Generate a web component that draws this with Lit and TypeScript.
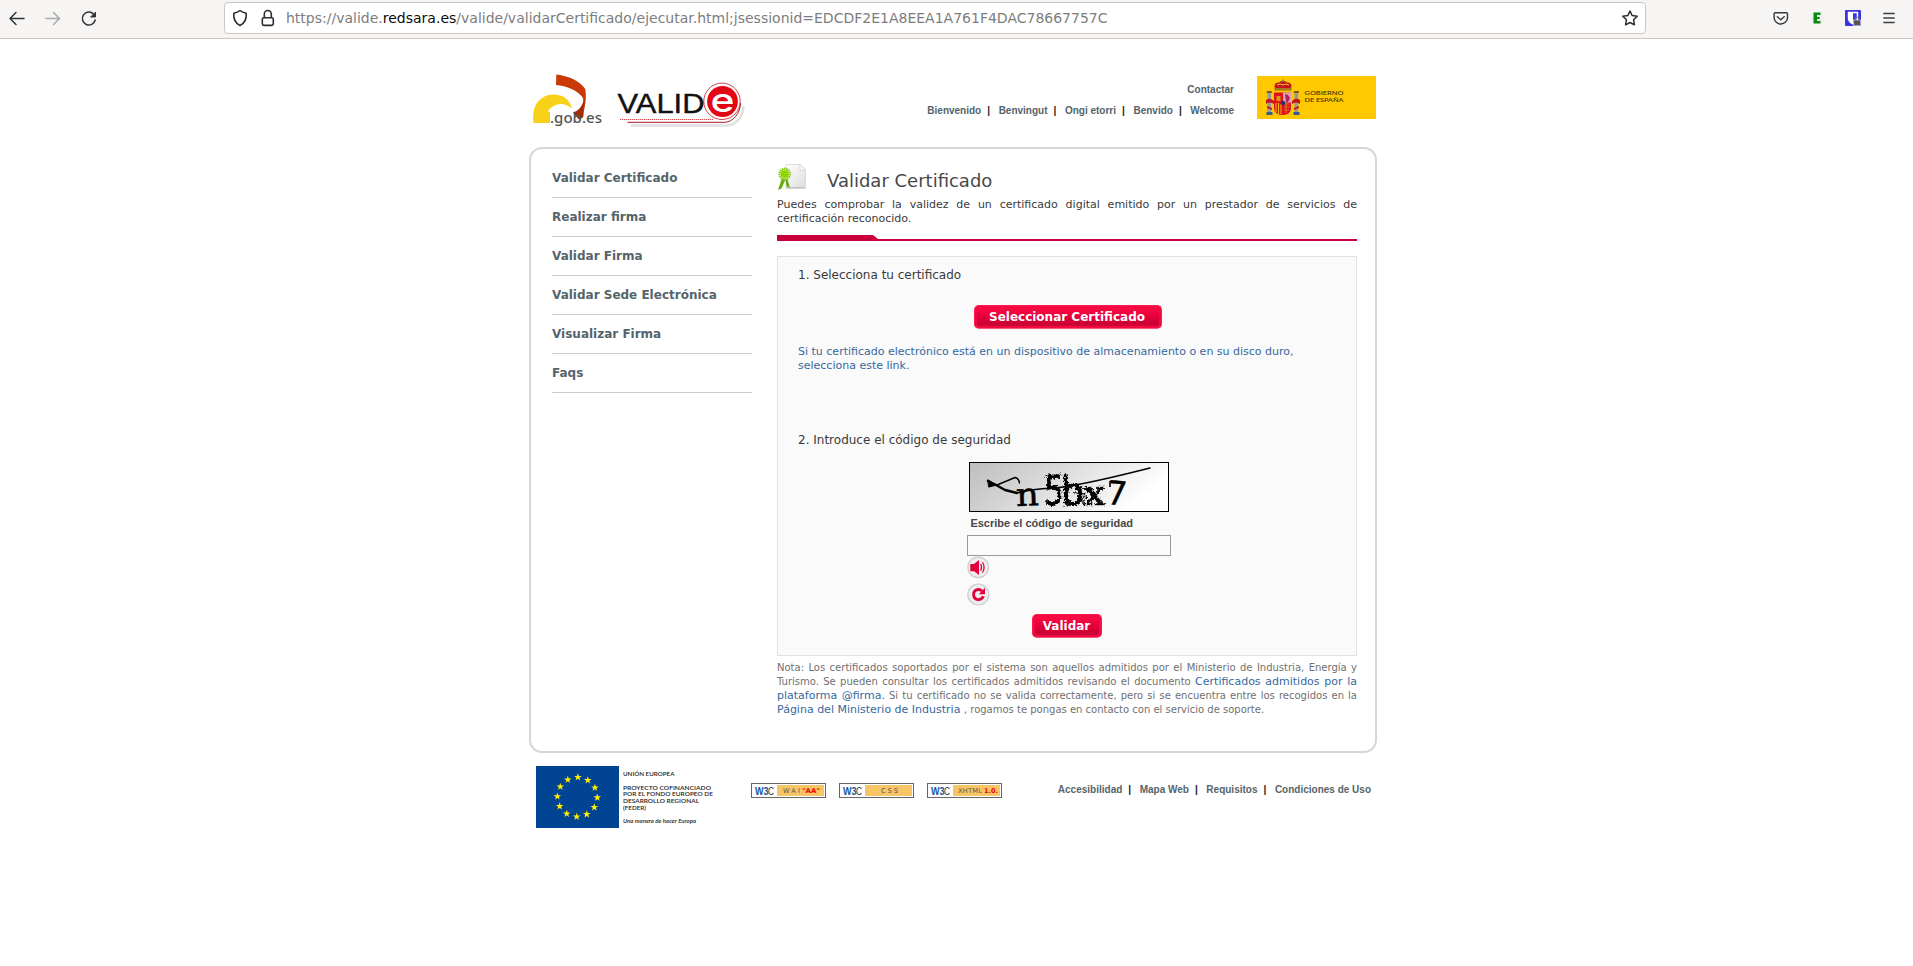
import { LitElement, html, css, svg } from "lit";
import { customElement } from "lit/decorators.js";

@customElement("browser-bar")
class BrowserBar extends LitElement {
  static styles = css`
    :host { display: block; }
    .bar { box-sizing: border-box; height: 39px; background: #f6f5f4; border-bottom: 1px solid #cdc7c2; display: flex; align-items: flex-start; }
    .tools { width: 224px; height: 36px; flex: none; }
    .field { box-sizing: border-box; width: 1422px; height: 32px; margin-top: 2px; background: #fff; border: 1px solid #cdc7c2; border-radius: 4px; display: flex; align-items: center; }
    .field svg { flex: none; }
    .url { flex: 1; font: 14px/30px "DejaVu Sans", sans-serif; color: #7d7d7d; white-space: nowrap; }
    .host { color: #0c0c0d; }
    svg { display: block; }
    .ext { flex: none; }
  `;
  render() {
    return html`<div class="bar">
      <svg class="tools" width="224" height="36" fill="none" stroke="#2e3436" stroke-width="1.5" stroke-linecap="round" stroke-linejoin="round">
        <path d="M10 18.5H24M16 12.5L10 18.5L16 24.5"/>
        <path stroke="#a9aaa9" d="M46 18.5H59.5M53.5 12.5L59.5 18.5L53.5 24.5"/>
        <path d="M93.5 14A6.5 6.5 0 1 0 95.2 20"/><path fill="#2e3436" stroke-width="1" d="M95.5 12.5V17H91Z"/>
      </svg>
      <div class="field">
        <svg width="61" height="30" fill="none" stroke="#2a2e30" stroke-width="1.6" stroke-linejoin="round">
          <path d="M15 7.5C13 9.2 11 9.8 8.8 10.2C8.4 15.5 10 20 15 22.5C20 20 21.6 15.5 21.2 10.2C19 9.8 17 9.2 15 7.5Z"/>
          <rect x="37.3" y="14.8" width="11" height="7.6" rx="1.6"/><path d="M39.3 14.5V11a3.5 3.5 0 0 1 7 0V14.5"/>
        </svg>
        <span class="url">https://valide.<span class="host">redsara.es</span>/valide/validarCertificado/ejecutar.html;jsessionid=EDCDF2E1A8EEA1A761F4DAC78667757C</span>
        <svg width="31" height="30" fill="none" stroke="#2a2e30" stroke-width="1.5" stroke-linejoin="round"><path d="M16 8L18.2 12.6L23.2 13.3L19.6 16.8L20.4 21.8L16 19.5L11.6 21.8L12.4 16.8L8.8 13.3L13.8 12.6Z"/></svg>
      </div>
      <svg class="ext" width="267" height="36" fill="none">
        <path d="M129 12.8H140.5a1 1 0 0 1 1 1V17.5a6.5 6.3 0 0 1-13.4 0V13.8Z" stroke="#33383c" stroke-width="1.4"/>
        <path d="M131.4 16.8L134.8 19.8L138.2 16.8" stroke="#33383c" stroke-width="1.4" stroke-linecap="round" stroke-linejoin="round"/>
        <circle cx="171" cy="18" r="7" fill="#efefef"/>
        <path d="M167.5 12.5H174.5V15H171V16.9H173.7V19.1H171V21.1H174.5V23.6H167.5Z" fill="#0a8a0a"/>
        <rect x="199" y="10" width="16" height="16" rx="1" fill="#3a35e0"/>
        <path d="M201.8 11.8H212.2V18.5C212.2 21.5 209 23.8 207 24.7C205 23.8 201.8 21.5 201.8 18.5Z" fill="#fff"/>
        <path d="M207 13.2H210.7V18.5C210.7 20.5 208.5 22.2 207 23Z" fill="#3a35e0"/>
        <rect x="207.5" y="20" width="7" height="5.5" fill="#555" stroke="#e8e8e8" stroke-width=".6"/><path d="M209 20v-1a2 2 0 0 1 4 0v1" stroke="#777"/>
        <path d="M237.3 13.5H248.7M237.3 18H248.7M237.3 22.5H248.7" stroke="#3a3e40" stroke-width="1.4"/>
      </svg>
    </div>`;
  }
}

@customElement("site-header")
class SiteHeader extends LitElement {
  static styles = css`
    :host { display: block; }
    .head { height: 108px; display: flex; padding-right: 1px; }
    svg { display: block; flex: none; }
    .links { flex: 1; display: flex; flex-direction: column; align-items: flex-end; padding: 44px 23px 0 0; font: bold 10px/14px "Liberation Sans", Arial, sans-serif; color: #55646b; gap: 7px; }
    .langs { display: flex; white-space: pre; }
    .sep { color: #222; width: 17.4px; padding-left: 6px; box-sizing: border-box; }
    .crest { margin-top: 37px; }
  `;
  render() {
    const langs = ["Bienvenido", "Benvingut", "Ongi etorri", "Benvido", "Welcome"];
    return html`<div class="head">
      <svg width="220" height="108" viewBox="529 39 220 108">
        <path d="M556.3 74.5C570 76.5 580 81 585.3 89C586.2 95 586 102 584.5 108C583.5 112 584 114 583.2 117L579 119.5C580 115 579.5 112 581 108C583.5 102 584.5 99 581 95.5C575 89.5 567 86 556 85Z" fill="#c93a06"/>
        <path d="M585 99C584 106 582 112 583.2 117L579 119.5C576 116 574 114 573 112C578 112 582 106 585 99Z" fill="#a52b04"/>
        <path d="M533.5 123C532 111 535 103 542 98C548 93.5 558 93.5 564 97C568 99.5 571 104 572 108.5C563 102 555 102.5 547.5 111.5H550V123Z" fill="#f7d117"/>
        <text x="550" y="122.5" font-family="Noto Sans" font-weight="500" font-size="15" fill="#555" textLength="52" lengthAdjust="spacingAndGlyphs">.gob.es</text>
        <path d="M631 125.4H727C735 125 743 118 743.5 106" fill="none" stroke="#e0e0e0" stroke-width="2.5"/>
        <circle cx="722" cy="101.3" r="18.2" fill="#fff" stroke="#d1444a" stroke-width="1"/>
        <circle cx="722.5" cy="101.5" r="15.4" fill="#e30613"/>
        <path d="M620 119.5H713" stroke="#d34d50" stroke-width="1" stroke-dasharray="1.3 .7"/><path d="M627.5 122.3H725C733 122 740.5 113 740.5 103" fill="none" stroke="#a71a20" stroke-width="1"/>
        <text x="617.5" y="113" font-family="Liberation Sans" font-size="27" fill="#111" stroke="#111" stroke-width=".4" textLength="87" lengthAdjust="spacingAndGlyphs">VALID</text>
        <text x="710.5" y="112" font-family="Inter" font-weight="500" font-size="33" fill="#fff" textLength="24" lengthAdjust="spacingAndGlyphs">e</text>
      </svg>
      <div class="links">
        <span>Contactar</span>
        <div class="langs">${langs.map((l, i) => html`${i ? html`<span class="sep">|</span>` : ""}<span>${l}</span>`)}</div>
      </div>
      <svg class="crest" width="119" height="43">
        <rect width="119" height="43" fill="#ffc800"/>
        <g fill="#c4161c">
          <path d="M18 13Q16 6 22 6.5Q26 3 30 6.5Q36 6 34 13Z"/><path d="M25.3 3.5h1.4v3h-1.4z" fill="#777"/>
          <path d="M17.5 12h17v2.6h-17z" fill="#a47b18"/><path d="M20 9q3-2 6 0q3-2 6 0" stroke="#f5c518" fill="none"/>
          <path d="M17 16.5H34V32Q34 38.5 25.5 39Q17 38.5 17 32Z" fill="#e01020"/>
          <path d="M26 16.5H34V26.5H26Z" fill="#d9a5b5"/><path d="M28 18l3 1 2 3-2 4h-2z" fill="#b3225f"/>
          <path d="M19.5 20h4v5h-4z" fill="#d99a10"/>
          <path d="M19 27V36M21.5 27V38M24 28V38" stroke="#f2b90c" stroke-width="1"/>
          <path d="M27 28h6M27 31h6M27 34h5M29 27v10" stroke="#d39b1b" stroke-width=".7"/>
          <circle cx="26" cy="27" r="2.2" fill="#22386f"/>
          <path d="M10.5 17h3.6v19h-3.6zM37.5 17h3.6v19h-3.6z" fill="#96999c"/>
          <path d="M9.8 15h5v2h-5zM36.8 15h5v2h-5z" fill="#7d5a13"/>
          <path d="M9.5 36h6v3h-6zM36.5 36h6v3h-6z" fill="#385a92"/>
          <path d="M9 24Q13 21 17 25V28Q12 25 9 28ZM35 25Q39 21 43 24V28Q39 25 35 28Z"/><path d="M10 30l5 2v2l-5-2zM42 30l-5 2v2l5-2z"/>
        </g>
        <g font-family="Lato" font-weight="600" font-size="6.2" fill="#4a3b00"><text x="47.5" y="18.6" textLength="39" lengthAdjust="spacingAndGlyphs">GOBIERNO</text><text x="47.5" y="26.3" textLength="39" lengthAdjust="spacingAndGlyphs">DE ESPAÑA</text></g>
      </svg>
    </div>`;
  }
}

@customElement("side-menu")
class SideMenu extends LitElement {
  static styles = css`
    :host { display: block; }
    .menu { display: flex; flex-direction: column; font: bold 12px/38px "DejaVu Sans", sans-serif; color: #55646b; }
    .item { border-bottom: 1px solid #ccc; }
  `;
  render() {
    return html`<nav class="menu">${["Validar Certificado", "Realizar firma", "Validar Firma", "Validar Sede Electrónica", "Visualizar Firma", "Faqs"].map((t) => html`<span class="item">${t}</span>`)}</nav>`;
  }
}

@customElement("certificate-form")
class CertificateForm extends LitElement {
  static styles = css`
    :host { display: block; font-family: "DejaVu Sans", sans-serif; color: #3a3a3a; }
    svg { display: block; overflow: visible; }
    .head { display: flex; height: 35px; gap: 20px; }
    .seal { margin-top: 1px; }
    .title { margin: 0; font-size: 18px; font-weight: normal; line-height: 35px; color: #484848; }
    .intro { margin: 0; font-size: 11px; line-height: 14px; text-align: justify; }
    .rule { margin: 9px 0 15px; }
    .box { box-sizing: border-box; height: 400px; border: 1px solid #e2e2e2; background: #fafafa; padding: 10px 20px 0; }
    .step { font-size: 12px; line-height: 16px; }
    .btn { box-sizing: border-box; height: 24px; width: 188px; margin: 22px 0 0 175.5px; display: flex; align-items: center; justify-content: center; border: 1px solid #ff1a4f; border-bottom-color: #f8557c; border-radius: 5px; background: linear-gradient(#ff1045, #e8003c 45%, #cc0034 80%, #d01040); box-shadow: inset 0 0 0 2px #f20a40; color: #fff; font: bold 12px/20px "DejaVu Sans", sans-serif; padding: 0 1px 1px 0; }
    .small { width: 70px; margin: 8px 0 0 233.5px; padding: 0 0 1px; }
    .link { color: #36689e; }
    .alt { margin: 16px 0 59px; width: 500px; font-size: 11px; line-height: 14px; }
    .captcha { margin: 14px 0 0 169px; width: 204px; display: flex; flex-direction: column; align-items: flex-start; }
    .picture { margin-left: 2px; }
    .label { margin: 4px 0 5px 3.4px; font: bold 11px/14px "Liberation Sans", Arial, sans-serif; color: #484848; }
    .input { box-sizing: border-box; width: 204px; height: 21px; border: 1px solid #999; background: #fafafa; padding: 0; border-radius: 0; display: block; margin: 0; }
    .again { margin-top: 5px; }
    .note { margin: 5px 0 0; font-size: 10px; line-height: 14px; color: #707070; text-align: justify; }
    .note .link { font-size: 11px; line-height: 13px; }
    .page-link { margin-right: 3px; }
  `;
  render() {
    return html`
      <div class="head">
        <svg class="seal" width="30" height="30">
          <defs><linearGradient id="pg" x2="1" y2="1"><stop stop-color="#fff"/><stop offset="1" stop-color="#ddd"/></linearGradient></defs>
          <path d="M9 .5H23L28.5 6V23.5H9Z" fill="url(#pg)" stroke="#d5d5d5" stroke-width=".8"/><path d="M9 24H28.5" stroke="#aaa"/><path d="M23 .5V6H28.5Z" fill="#fff" stroke="#ccc" stroke-width=".7"/>
          <path d="M5 14L1 26L4.5 24.5L8.5 15.5L9.5 22.5L13 23.5L10 14Z" fill="#6aad0a"/>
          <circle cx="7.7" cy="10" r="5.4" fill="#c7e87a" stroke="#8cc91c" stroke-width="2.2" stroke-dasharray="1.3 .9"/><circle cx="7.7" cy="10" r="3.8" fill="#8dd600"/>
        </svg>
        <h1 class="title">Validar Certificado</h1>
      </div>
      <p class="intro">Puedes comprobar la validez de un certificado digital emitido por un prestador de servicios de certificación reconocido.</p>
      <svg class="rule" width="580" height="6"><path d="M0 0H96L101 4H580V6H0Z" fill="#c9003a"/></svg>
      <div class="box">
        <div class="step">1. Selecciona tu certificado</div>
        <button class="btn">Seleccionar Certificado</button>
        <div class="alt link">Si tu certificado electrónico está en un dispositivo de almacenamiento o en su disco duro, selecciona este link.</div>
        <div class="step">2. Introduce el código de seguridad</div>
        <div class="captcha">
          <svg class="picture" width="200" height="50">
            <defs>
              <linearGradient id="cg" x2="1" y2=".3"><stop stop-color="#bebebe"/><stop offset=".3" stop-color="#d0d0d0"/><stop offset="1" stop-color="#fff"/></linearGradient>
              <filter id="rough" x="-20%" y="-20%" width="140%" height="140%"><feTurbulence type="fractalNoise" baseFrequency=".45" numOctaves="2" seed="4"/><feDisplacementMap in="SourceGraphic" scale="6" xChannelSelector="R" yChannelSelector="G"/></filter>
            </defs>
            <rect x=".5" y=".5" width="199" height="49" fill="url(#cg)" stroke="#000"/>
            <g fill="none" stroke="#000" stroke-linecap="round" stroke-linejoin="round">
              <path d="M28 23L46 15.5Q50 16.5 50.5 21" stroke-width="1.4"/>
              <path d="M19 19L27 23L36 28L48 31" stroke-width="2.4"/><path d="M48 31Q62 27 84 26T181 6" stroke-width="1.5"/>
              <path d="M19 18L28 23L20 25Z" fill="#000"/>
            </g>
            <g stroke="#000" stroke-width=".5">
              <text x="47" y="43.5" font-family="DejaVu Serif" font-size="32" textLength="23" lengthAdjust="spacingAndGlyphs" transform="rotate(-2 58 35)">n</text>
              <g filter="url(#rough)">
                <text x="75" y="42.5" font-family="DejaVu Sans" font-size="40" textLength="20" lengthAdjust="spacingAndGlyphs" stroke-width=".8">5</text>
                <text x="92" y="42.5" font-family="DejaVu Sans" font-size="39" textLength="23" lengthAdjust="spacingAndGlyphs" stroke-width="1">b</text>
                <text x="114" y="43" font-family="DejaVu Serif" font-size="33" textLength="23" lengthAdjust="spacingAndGlyphs">x</text>
                <path d="M105 30Q116 36 115 43M108 27Q121 35 119 43M100 43Q114 45 116 31M76 14Q84 16 92 12M78 38Q84 44 92 38M96 12V43" fill="none" stroke-width="1"/>
              </g>
              <text x="138" y="43" font-family="DejaVu Sans" font-size="33" textLength="20" lengthAdjust="spacingAndGlyphs" transform="rotate(5 148 32)">7</text>
              <path d="M141 19V25" stroke-width="1.6"/>
            </g>
          </svg>
          <span class="label">Escribe el código de seguridad</span>
          <input class="input" aria-label="Código de seguridad">
          <svg width="23" height="22"><circle cx="11.2" cy="11.4" r="10.3" fill="#eee" stroke="#ccc" stroke-width="1.2"/><path d="M3.3 8H7L12 4V19L7 15.2H3.3Z" fill="#e3003a"/><path d="M13.7 8Q15.4 11.3 13.7 14.8M15.5 6.2Q18.6 11.4 15.5 16.6" fill="none" stroke="#e3003a" stroke-width="1.2"/></svg>
          <svg class="again" width="23" height="23"><circle cx="11.3" cy="11.5" r="10.5" fill="#eee" stroke="#ccc" stroke-width="1.2"/><path d="M15 8Q13 6.2 10.5 6.6Q6.4 7.5 6.6 12Q7.2 16.5 11.5 16.6Q15 16.4 16.4 13.2" fill="none" stroke="#e3003a" stroke-width="2.8"/><path d="M18 4.8V11.2H11.8Z" fill="#e3003a"/></svg>
        </div>
        <button class="btn small">Validar</button>
      </div>
      <p class="note">Nota: Los certificados soportados por el sistema son aquellos admitidos por el Ministerio de Industria, Energía y Turismo. Se pueden consultar los certificados admitidos revisando el documento <span class="link">Certificados admitidos por la plataforma @firma.</span> Si tu certificado no se valida correctamente, pero si se encuentra entre los recogidos en la <span class="link">Página del Ministerio de Industria </span>, rogamos te pongas en contacto con el servicio de soporte.</p>`;
  }
}

@customElement("site-footer")
class SiteFooter extends LitElement {
  static styles = css`
    :host { display: block; }
    .foot { display: flex; padding: 13px 6px 0 7px; }
    svg { display: block; flex: none; overflow: visible; }
    .badges { display: flex; gap: 13px; margin: 17px 0 0 35px; }
    .links { margin: 17px 0 0 auto; display: flex; font: bold 10px/14px "Liberation Sans", Arial, sans-serif; color: #55646b; }
    .sep { color: #222; width: 17.4px; padding-left: 6px; box-sizing: border-box; }
  `;
  badge(name: string, x: number, w: number, extra = "", ex = 0, ew = 0) {
    return html`<svg width="75" height="15">
      <rect x=".5" y=".5" width="74" height="14" fill="#fff" stroke="#666"/><rect x="26" y="2" width="47" height="11" fill="#f7c566"/>
      <text x="4" y="11.5" font-family="Liberation Sans" font-weight="bold" font-size="11" fill="#15559a" textLength="13.5" lengthAdjust="spacingAndGlyphs">W3</text>
      <text x="17" y="11.5" font-family="Liberation Sans" font-size="11" fill="#333" textLength="6" lengthAdjust="spacingAndGlyphs">C</text>
      <text x=${x} y="10" font-family="DejaVu Sans" font-size="6.6" fill="#555" textLength=${w}>${name}</text>
      ${extra ? svg`<text x=${ex} y="10" font-family="DejaVu Sans" font-weight="bold" font-size="6.6" fill="#e00" textLength=${ew} lengthAdjust="spacingAndGlyphs">${extra}</text>` : ""}
    </svg>`;
  }
  render() {
    const star = "0,-4 .95,-1.25 3.8,-1.25 1.5,.5 2.35,3.2 0,1.55 -2.35,3.2 -1.5,.5 -3.8,-1.25 -.95,-1.25";
    const lines: [string, number, number][] = [["UNIÓN EUROPEA", 9.8, 51.5], ["PROYECTO COFINANCIADO", 23.5, 88], ["POR EL FONDO EUROPEO DE", 30, 90], ["DESARROLLO REGIONAL", 36.8, 76], ["(FEDER)", 43.5, 23]];
    return html`<div class="foot">
      <svg width="180" height="62">
        <rect width="83" height="62" fill="#024494"/>
        ${Array.from({ length: 12 }, (_, i) => { const a = (i * Math.PI) / 6 + 0.03; return svg`<polygon points=${star} fill="#ffef00" transform="translate(${41.3 + 20 * Math.sin(a)} ${31 - 19.7 * Math.cos(a)})"/>`; })}
        <g font-family="Lato" font-weight="600" font-size="6.5" fill="#222">${lines.map(([t, y, w]) => svg`<text x="87" y=${y} textLength=${w} lengthAdjust="spacingAndGlyphs">${t}</text>`)}<text x="87" y="56.7" font-style="italic" textLength="73" lengthAdjust="spacingAndGlyphs">Una manera de hacer Europa</text></g>
      </svg>
      <div class="badges">${this.badge("WAI", 32, 17, '"AA"', 51, 18)}${this.badge("CSS", 42, 17)}${this.badge("XHTML", 31, 24, "1.0.", 57, 14)}</div>
      <div class="links">${["Accesibilidad", "Mapa Web", "Requisitos", "Condiciones de Uso"].map((l, i) => html`${i ? html`<span class="sep">|</span>` : ""}<span>${l}</span>`)}</div>
    </div>`;
  }
}

@customElement("app-root")
class AppRoot extends LitElement {
  static styles = css`
    :host { display: block; min-height: 966px; background: #fff; }
    .page { width: 848px; margin-left: 529px; }
    .card { box-sizing: border-box; height: 606px; border: 2px solid #d6d6d6; border-radius: 13px; display: grid; grid-template-columns: 200px 580px; column-gap: 25px; padding-left: 21px; }
    .side { padding-top: 10px; }
    .main { padding-top: 14px; }
  `;
  render() {
    return html`<browser-bar></browser-bar>
      <div class="page">
        <site-header></site-header>
        <div class="card"><side-menu class="side"></side-menu><certificate-form class="main"></certificate-form></div>
        <site-footer></site-footer>
      </div>`;
  }
}
